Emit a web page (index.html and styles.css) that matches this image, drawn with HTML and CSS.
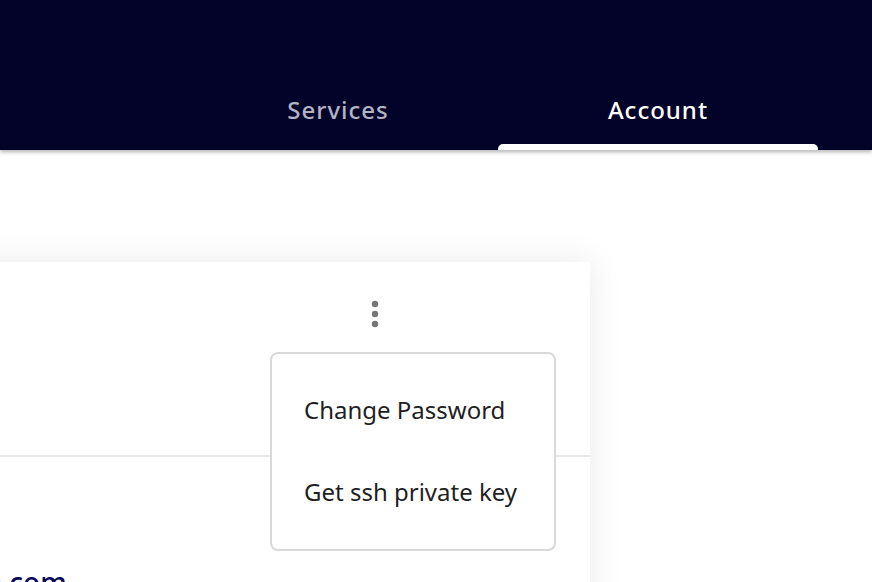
FILE: index.html
```html
<!DOCTYPE html>
<html>
<head>
<meta charset="utf-8">
<link rel="stylesheet" href="styles.css">
</head>
<body>
<header class="topbar">
  <nav class="tabs">
    <a class="tab">Services</a>
    <a class="tab tab-active">Account</a>
  </nav>
</header>
<main class="content">
  <section class="card">
    <div class="card-head">
      <button class="more" aria-label="More">
        <svg width="8" height="28" viewBox="0 0 8 28"><circle cx="4" cy="4" r="3.2" fill="#767676"/><circle cx="4" cy="14" r="3.2" fill="#767676"/><circle cx="4" cy="24" r="3.2" fill="#767676"/></svg>
      </button>
    </div>
    <div class="card-body">
      <p class="email">example@example.com</p>
    </div>
    <ul class="menu">
      <li class="menu-item">Change Password</li>
      <li class="menu-item">Get ssh private key</li>
    </ul>
  </section>
</main>
</body>
</html>
```
FILE: styles.css
```css
* { box-sizing: border-box; }
html, body { margin: 0; padding: 0; }
body {
  width: 872px;
  height: 582px;
  overflow: hidden;
  background: #ffffff;
  font-family: "Noto Sans", "DejaVu Sans", sans-serif;
}
.topbar {
  height: 150px;
  background: #03032a;
  box-shadow: 0 2px 4px rgba(0,0,0,0.3);
  display: flex;
  justify-content: flex-end;
  align-items: flex-end;
  padding-right: 54px;
  position: relative;
  z-index: 2;
}
.tabs { display: flex; }
.tab {
  width: 320px;
  height: 82px;
  display: flex;
  justify-content: center;
  align-items: flex-start;
  padding-top: 25px;
  font-size: 24px;
  font-weight: 500;
  letter-spacing: 1px;
  color: #b3b3c6;
  position: relative;
}
.tab-active { color: #ffffff; }
.tab-active::after {
  content: "";
  position: absolute;
  left: 0; right: 0; bottom: 0;
  height: 6px;
  background: #ffffff;
  border-radius: 5px 5px 0 0;
}
.content {
  padding-top: 112px;
}
.card {
  width: 890px;
  margin-left: -300px;
  height: 400px;
  background: #fff;
  box-shadow: 0 0 32px rgba(0,0,0,0.09);
  position: relative;
}
.card-head {
  height: 195px;
  border-bottom: 2px solid #e8e8e8;
  display: flex;
  justify-content: flex-end;
  padding-right: 211px;
  padding-top: 38px;
}
.more {
  background: none;
  border: 0;
  padding: 0;
  width: 8px;
  height: 28px;
  display: block;
}
.more svg { display: block; }
.card-body { padding: 0 0 0 48px; }
.email {
  margin: 106px 0 0;
  font-size: 28px;
  font-weight: 500;
  color: #07075a;
}
.menu {
  position: absolute;
  top: 90px;
  right: 34px;
  width: 286px;
  margin: 0;
  padding: 36px 0 0;
  list-style: none;
  background: #fff;
  border: 2px solid #d9d9d9;
  border-radius: 8px;
  height: 199px;
}
.menu-item {
  padding: 0 0 0 32px;
  height: 82px;
  font-size: 24px;
  color: #1f1f1f;
  line-height: 40px;
}
```
